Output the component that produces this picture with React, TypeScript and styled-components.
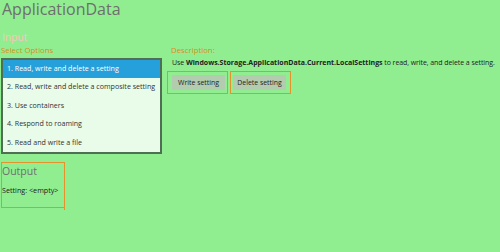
import React from "react";
import styled, { createGlobalStyle } from "styled-components";

const Global = createGlobalStyle`
  html, body { margin: 0; padding: 0; background: #90ee90; }
  body { font-family: "Open Sans", "Noto Sans", sans-serif; width: 500px; height: 252px; overflow: hidden; }
`;

const Page = styled.div`
  display: flex;
  flex-direction: column;
  padding: 0 0 0 1px;
`;

const Title = styled.h1`
  margin: 0 0 0 1px;
  font-size: 16px;
  font-weight: 400;
  line-height: 18px;
  color: #6e6e6e;
`;

const InputHeader = styled.div`
  margin: 13px 0 0 1px;
  font-size: 10.2px;
  line-height: 12px;
  color: #f3c6c2;
`;

const Row = styled.div`
  display: flex;
  gap: 5px;
  align-items: flex-start;
`;

const LeftCol = styled.div`
  display: flex;
  flex-direction: column;
  width: 161px;
`;

const Label = styled.div<{ $indent?: number }>`
  font-size: 7.8px;
  line-height: 13px;
  margin-top: 1px;
  color: #d98f22;
  margin-left: ${(p) => p.$indent ?? 0}px;
  white-space: nowrap;
`;

const List = styled.ul`
  list-style: none;
  margin: 1px 0 0 0;
  padding: 0;
  border: 2px solid #4f6f55;
  background: #e9fbe9;
  box-sizing: border-box;
  width: 161px;
  height: 96px;
`;

const Item = styled.li<{ $selected?: boolean }>`
  height: 18.4px;
  line-height: 17px;
  padding-left: 4px;
  font-size: 7.1px;
  color: ${(p) => (p.$selected ? "#ffffff" : "#333333")};
  background: ${(p) => (p.$selected ? "#26a0da" : "transparent")};
  white-space: nowrap;
`;

const RightCol = styled.div`
  display: flex;
  flex-direction: column;
`;

const Desc = styled.div`
  margin: 1px 0 0 5px;
  font-size: 7px;
  line-height: 10px;
  color: #222;
  white-space: nowrap;
  letter-spacing: -0.08px;
  b { font-weight: 700; letter-spacing: 0; }
`;

const Buttons = styled.div`
  display: flex;
  gap: 2px;
  margin-top: 3px;
`;

const Frame = styled.div<{ $mirror?: boolean }>`
  border: 1px solid #e4922c;
  padding: ${(p) => (p.$mirror ? "3px 4px 3px 2px" : "3px 2px 3px 4px")};
  width: 61px;
  height: 23px;
  box-sizing: border-box;
  display: flex;
`;

const Button = styled.button`
  flex: 1;
  border: none;
  background: #b3cbae;
  font-family: inherit;
  font-size: 6.9px;
  color: #222;
  padding: 0;
  margin: 0;
  white-space: nowrap;
`;

const OutputBox = styled.div`
  margin-top: 8px;
  width: 64px;
  height: 46px;
  box-sizing: border-box;
  border: 1px solid #e4922c;
  padding: 1.5px 0 0 0;
  position: relative;
  &::after {
    content: "";
    position: absolute;
    right: -1px;
    bottom: -3px;
    width: 1px;
    height: 3px;
    background: #e4922c;
  }
`;

const OutputTitle = styled.div`
  font-size: 10.5px;
  line-height: 13px;
  color: #6e6e6e;
`;

const OutputText = styled.div`
  margin-top: 7.5px;
  font-size: 7.2px;
  line-height: 10px;
  color: #222;
  white-space: nowrap;
`;

const items = [
  "1. Read, write and delete a setting",
  "2. Read, write and delete a composite setting",
  "3. Use containers",
  "4. Respond to roaming",
  "5. Read and write a file",
];

export default function App() {
  return (
    <>
      <Global />
      <Page>
        <Title>ApplicationData</Title>
        <InputHeader>Input</InputHeader>
        <Row>
          <LeftCol>
            <Label>Select Options</Label>
            <List>
              {items.map((t, i) => (
                <Item key={t} $selected={i === 0}>
                  {t}
                </Item>
              ))}
            </List>
          </LeftCol>
          <RightCol>
            <Label $indent={4}>Description:</Label>
            <Desc>
              Use <b>Windows.Storage.ApplicationData.Current.LocalSettings</b> to read, write, and delete a setting.
            </Desc>
            <Buttons>
              <Frame>
                <Button>Write setting</Button>
              </Frame>
              <Frame $mirror>
                <Button>Delete setting</Button>
              </Frame>
            </Buttons>
          </RightCol>
        </Row>
        <OutputBox>
          <OutputTitle>Output</OutputTitle>
          <OutputText>Setting: &lt;empty&gt;</OutputText>
        </OutputBox>
      </Page>
    </>
  );
}
